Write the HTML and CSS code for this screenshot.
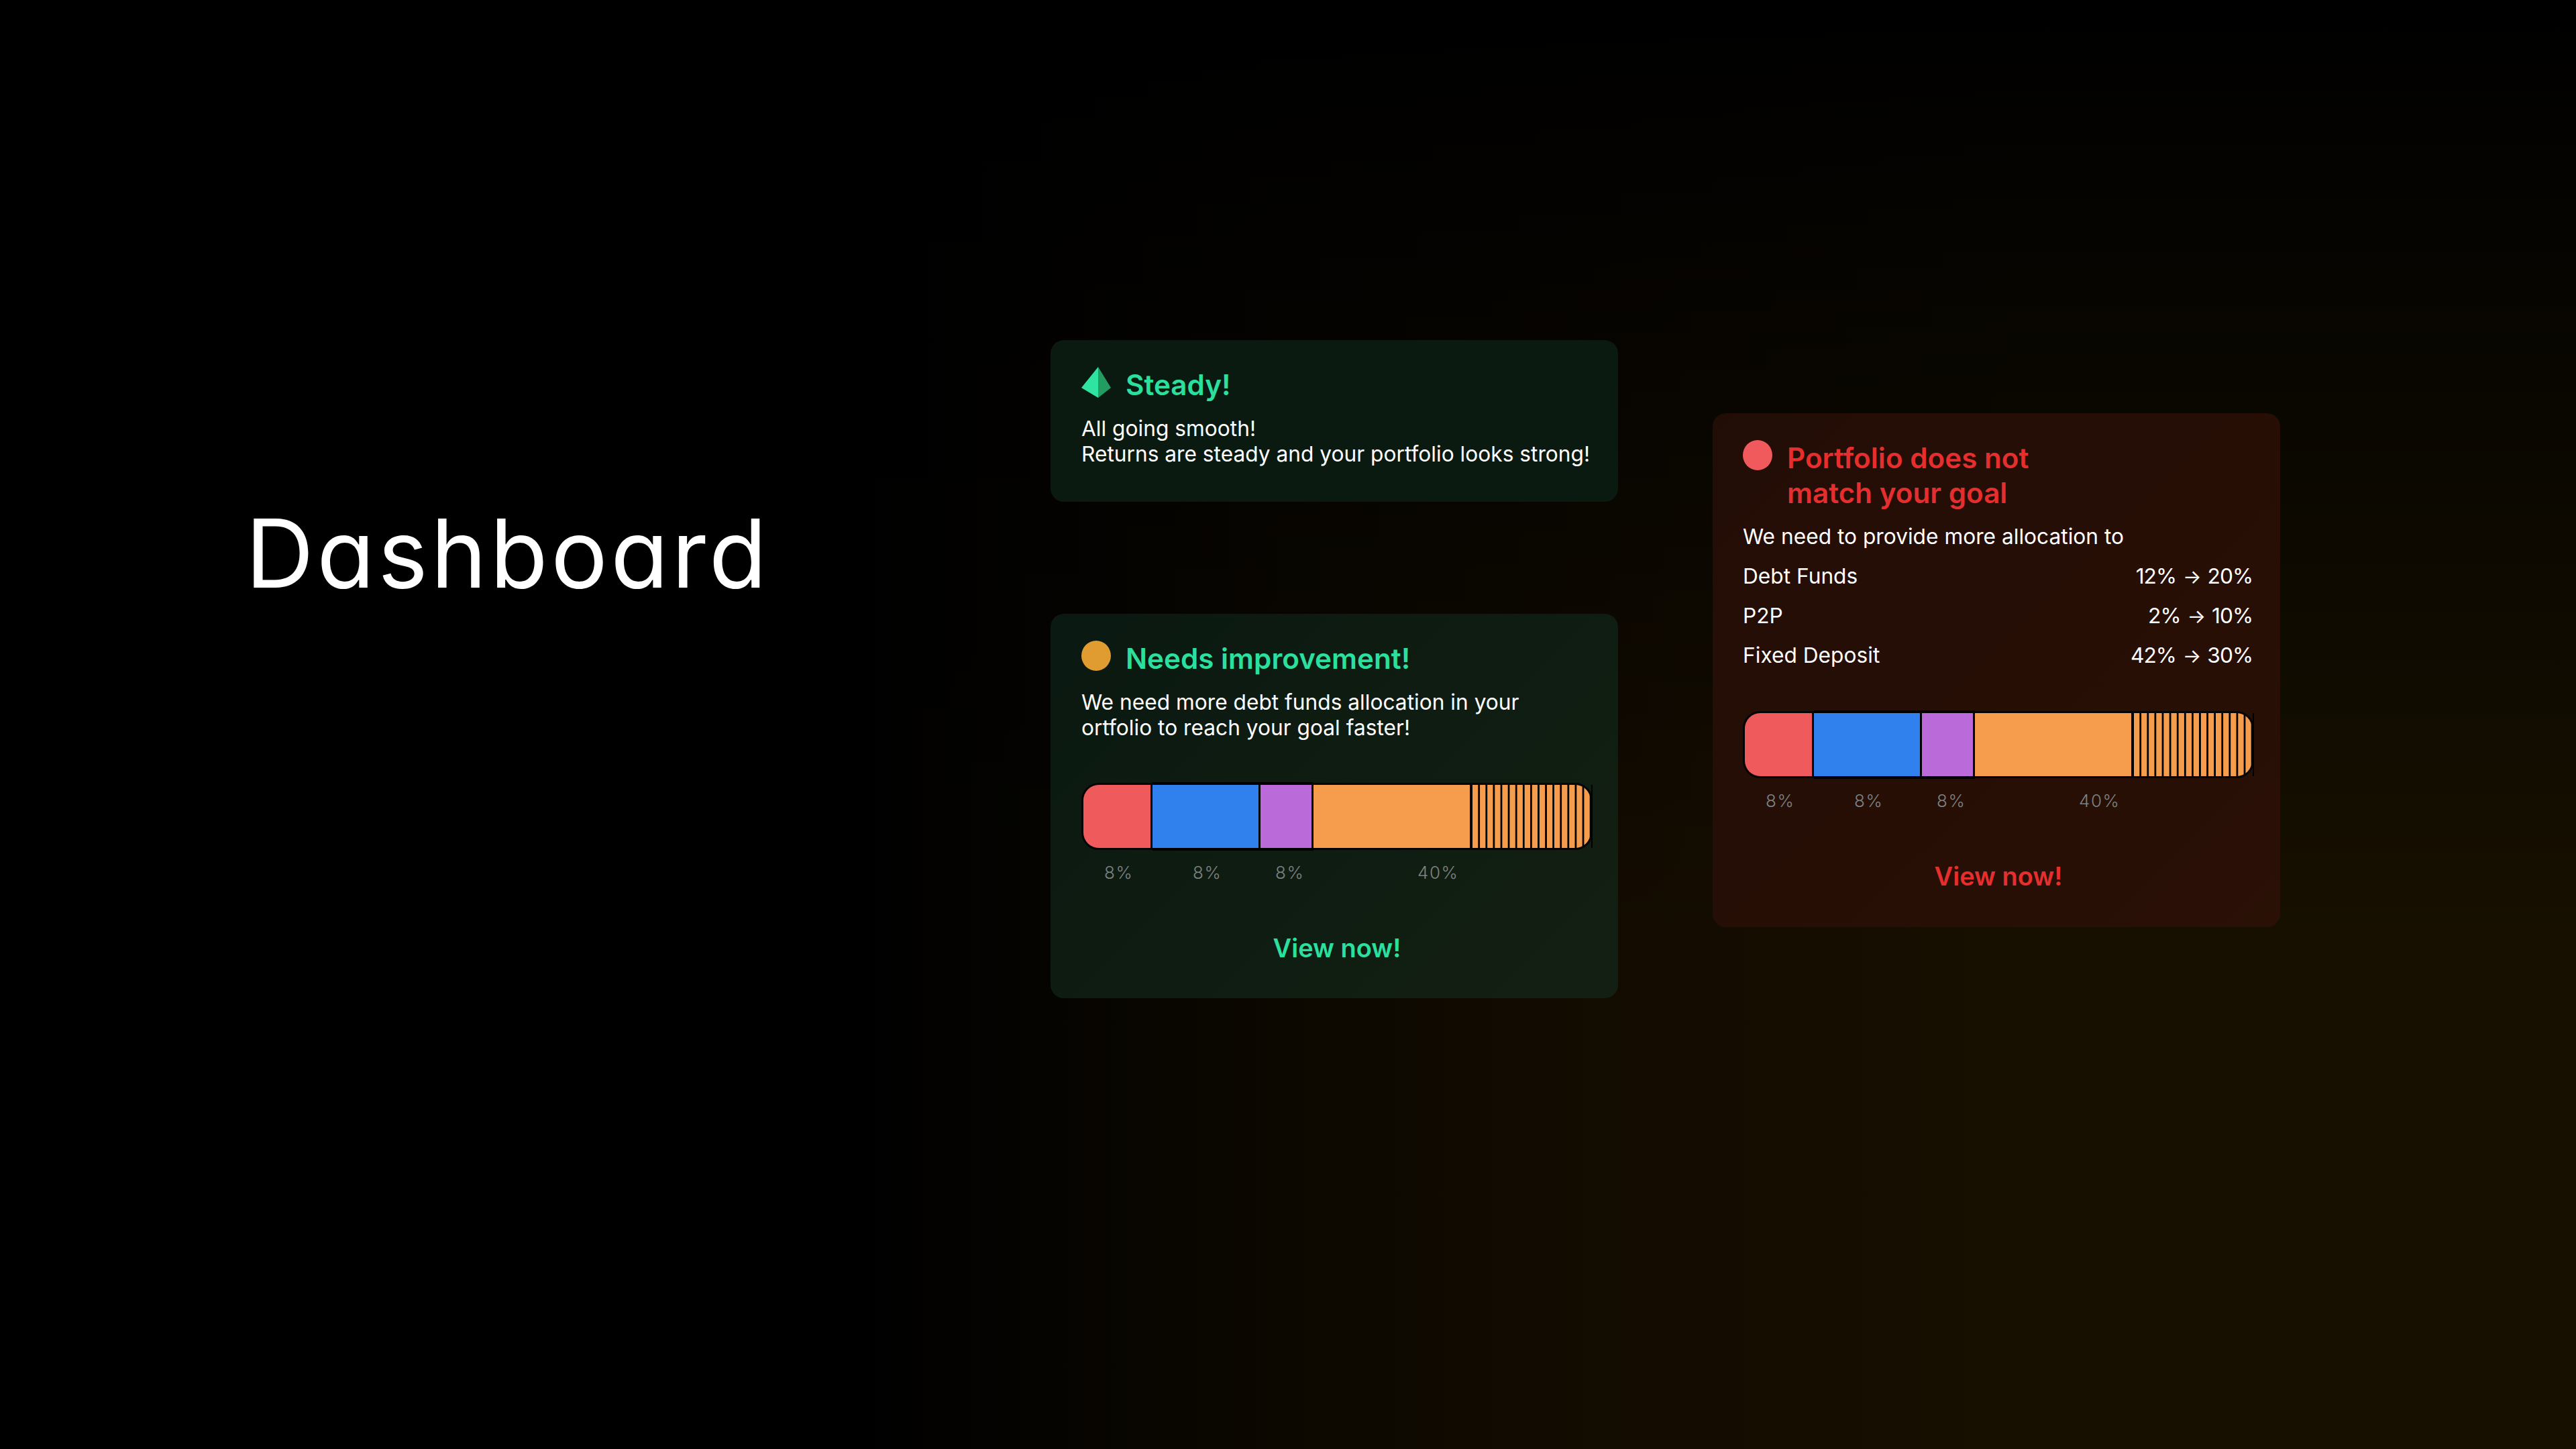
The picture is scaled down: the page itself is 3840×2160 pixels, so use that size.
FILE: index.html
```html
<!DOCTYPE html>
<html lang="en">
<head>
    <meta charset="UTF-8">
    <meta name="viewport" content="width=device-width, initial-scale=1.0">
    <title>Dashboard</title>
    <link rel="stylesheet" href="styles.css">
</head>
<body>

<div class="page">
    <h1 class="page-title">Dashboard</h1>

    <div class="col col-left">
        <!-- Steady card -->
        <div class="card card-green card-steady">
            <div class="card-head">
                <svg class="icon" viewBox="0 0 44 46">
                    <polygon points="25,0 0,31 25,46" fill="#2fe3a0"/>
                    <polygon points="25,0 44,31 25,46" fill="#229c60"/>
                </svg>
                <h3>Steady!</h3>
            </div>
            <p>All going smooth!<br>Returns are steady and your portfolio looks strong!</p>
        </div>

        <!-- Needs improvement card -->
        <div class="card card-green card-improve">
            <div class="card-head">
                <span class="dot dot-amber"></span>
                <h3>Needs improvement!</h3>
            </div>
            <p>We need more debt funds allocation in your<br>ortfolio to reach your goal faster!</p>
            <div class="bar">
                <div class="seg seg-red"></div>
                <div class="seg seg-blue"></div>
                <div class="seg seg-purple"></div>
                <div class="seg seg-orange"></div>
                <div class="seg seg-hatch"></div>
            </div>
            <div class="bar-labels">
                <span>8%</span>
                <span>8%</span>
                <span>8%</span>
                <span>40%</span>
            </div>
            <a class="view-link">View now!</a>
        </div>
    </div>

    <div class="col col-right">
        <!-- Mismatch card -->
        <div class="card card-red">
            <div class="card-head">
                <span class="dot dot-red"></span>
                <h3>Portfolio does not<br>match your goal</h3>
            </div>
            <p>We need to provide more allocation to</p>
            <div class="alloc-row"><span>Debt Funds</span><span class="alloc-change">12% <span class="arrow">→</span> 20%</span></div>
            <div class="alloc-row"><span>P2P</span><span class="alloc-change">2% <span class="arrow">→</span> 10%</span></div>
            <div class="alloc-row"><span>Fixed Deposit</span><span class="alloc-change">42% <span class="arrow">→</span> 30%</span></div>
            <div class="bar">
                <div class="seg seg-red"></div>
                <div class="seg seg-blue"></div>
                <div class="seg seg-purple"></div>
                <div class="seg seg-orange"></div>
                <div class="seg seg-hatch"></div>
            </div>
            <div class="bar-labels">
                <span>8%</span>
                <span>8%</span>
                <span>8%</span>
                <span>40%</span>
            </div>
            <a class="view-link">View now!</a>
        </div>
    </div>
</div>

</body>
</html>
```

FILE: styles.css
```css
* {
    box-sizing: border-box;
}
body {
    margin: 0;
    padding: 0;
    background-color: #000;
    font-family: Inter, "Noto Sans", sans-serif;
    color: #fff;
}
.page {
    width: 3840px;
    height: 2160px;
    overflow: hidden;
    display: flex;
    align-items: flex-start;
    padding-left: 366px;
    background:
        linear-gradient(180deg, #000 0, rgba(0, 0, 0, 0.57) 620px, rgba(0, 0, 0, 0) 1400px),
        linear-gradient(90deg, #000 1250px, #0c0800 1900px, #140c00 2500px, #171000 3000px);
}
.page-title {
    width: 1200px;
    margin: 735px 0 0;
    font-size: 141px;
    font-weight: 400;
    line-height: 180px;
    letter-spacing: 4.6px;
    font-feature-settings: "cv11";
}
.col {
    width: 846px;
    flex-shrink: 0;
}
.col-left {
    padding-top: 507px;
}
.col-right {
    margin-left: 141px;
    padding-top: 616px;
}
.card {
    border-radius: 20px;
    padding: 0 20px 0 46px;
}
.card-green {
    background: linear-gradient(135deg, #0a1911, #131f12);
}
.card-red {
    height: 766px;
    padding-top: 40px;
    padding-left: 45px;
    background: linear-gradient(135deg, #220d06, #2a1005);
}
.card-steady {
    height: 241px;
    padding-top: 40px;
    background: #0b1a11;
}
.card-improve {
    height: 573px;
    margin-top: 167px;
    padding-top: 40px;
}
.card-head {
    display: flex;
    align-items: flex-start;
    gap: 22px;
}
.card-head h3 {
    margin: 1px 0 0;
    font-size: 42.2px;
    font-weight: 600;
    line-height: 52px;
}
.card-green h3,
.card-green .view-link {
    color: #2be09f;
}
.card-red h3,
.card-red .view-link {
    color: #e52f2f;
}
.icon {
    width: 44px;
    height: 46px;
    flex-shrink: 0;
}
.dot {
    width: 44px;
    height: 45px;
    border-radius: 50%;
    flex-shrink: 0;
}
.dot-amber {
    background-color: #e09b31;
}
.dot-red {
    background-color: #f05a5c;
}
.card p {
    margin: 20px 0 0;
    font-size: 31.7px;
    line-height: 38px;
}
.alloc-row {
    display: flex;
    justify-content: space-between;
    align-items: baseline;
    width: 760px;
    height: 38px;
    margin-top: 21px;
    font-size: 31.7px;
    line-height: 38px;
}
.alloc-change {
    letter-spacing: -1px;
    word-spacing: 2px;
}
.arrow {
    font-size: 29px;
    line-height: 0;
}
.bar {
    display: flex;
    width: 762px;
    height: 100px;
    margin-top: 63px;
    border: 3px solid #050505;
    border-radius: 26px;
}
.card-red .bar {
    margin-top: 64px;
}
.seg {
    height: 100%;
    border-right: 3px solid #000;
}
.seg-red {
    width: 103px;
    background-color: #ef5b5c;
    border-radius: 23px 0 0 23px;
}
.seg-blue {
    width: 161px;
    background-color: #3081ee;
    box-shadow: 0 4px 0 #000, 0 -4px 0 #000;
}
.seg-purple {
    width: 79px;
    background-color: #bb6ad9;
    box-shadow: 0 4px 0 #000, 0 -4px 0 #000;
}
.seg-orange {
    width: 236px;
    background-color: #f59c4d;
}
.seg-hatch {
    flex: 1;
    position: relative;
    border-right: none;
    border-radius: 0 23px 23px 0;
    background: linear-gradient(90deg, #f59c4d 8.3px, #000 8.3px) 1px 0 / 11.1px 100%;
}
/* the last stripe pokes out past the rounded corner */
.seg-hatch::after {
    content: "";
    position: absolute;
    top: 0;
    right: -3px;
    bottom: 0;
    width: 2px;
    background-color: #000;
}
.bar-labels {
    display: grid;
    grid-template-columns: 132px 123px 212px auto;
    justify-content: start;
    margin-top: 17px;
    padding-left: 34px;
    font-size: 26px;
    font-weight: 300;
    line-height: 34px;
    letter-spacing: 1.6px;
    color: #7d8282;
}
.view-link {
    display: block;
    width: 762px;
    margin-top: 72px;
    text-align: center;
    font-size: 38px;
    font-weight: 600;
    line-height: 46px;
}
```
